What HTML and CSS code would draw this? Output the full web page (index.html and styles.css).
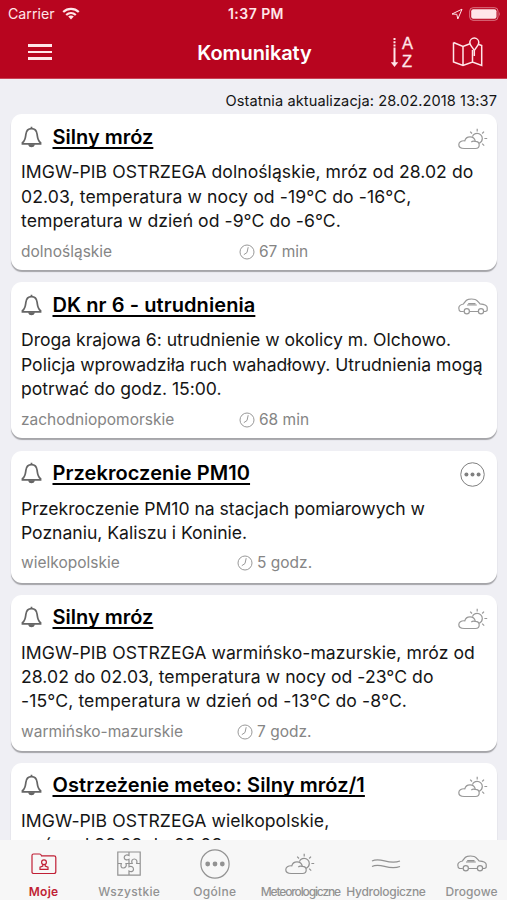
FILE: index.html
```html
<!DOCTYPE html>
<html lang="pl">
<head>
<meta charset="utf-8">
<meta name="viewport" content="width=device-width">
<title>Komunikaty</title>
<link rel="stylesheet" href="styles.css">
</head>
<body>
<svg class="defs" width="0" height="0">
  <symbol id="bell" viewBox="0 0 22 24"><path d="M1.5 19.3H20.5V18C17.5 15.7 17.4 13 16.9 9.3C16.4 5.2 14.3 3.3 11 3.3S5.6 5.2 5.1 9.3C4.6 13 4.5 15.7 1.5 18Z"/><path d="M11 3V1.2M8.6 20.5H13.4C13 22.3 9 22.3 8.6 20.5Z"/></symbol>
  <symbol id="weather" viewBox="0 0 30 22"><path d="M6.2 20.5H17.5C20 20.5 21.2 18.8 21.2 17S20 13.3 17.3 13.3C16.8 10.5 14.7 8.8 12 8.8C9.2 8.8 7.4 10.4 6.8 12.8C3 12.5 .8 14.5 .8 16.8C.8 19 2.8 20.5 6.2 20.5Z"/><path d="M13.3 14.2C14 13.3 15.5 12.8 17.3 13.3M14.5 8.6C15.2 6.5 17 5.4 19.1 5.4C22 5.4 24.3 7.7 24.3 10.6C24.3 12.8 23.2 14.4 21.2 15.4M19.2 .8V3.4M12.2 3.6L14 5.5M26 3.6L24.2 5.5M26.4 10.5H29.2M24.2 15.6L26.2 17.6"/></symbol>
  <symbol id="car" viewBox="0 0 30 18"><path d="M5.8 13.5H2.5C.8 12.8 .8 11.8 .8 10C.8 7.3 2.8 6.5 5.5 6C7.2 3.5 8.2 1.5 10.2 1.3C12 1 15.5 1 17.2 1.5C19 2 20.2 3.8 22 5.8C26.5 6.2 29.2 7 29.2 9.5V12C29.2 13.2 28 13.5 26 13.5M11.8 13.5H20M9 7H18.8M10.2 5.6H17.5"/><circle cx="8.8" cy="13.3" r="2.6"/><circle cx="23" cy="13.3" r="2.6"/></symbol>
  <symbol id="more" viewBox="0 0 30 30"><circle cx="15" cy="15" r="14.1"/><g class="solid"><circle cx="7.7" cy="15" r="2.4"/><circle cx="15" cy="15" r="2.4"/><circle cx="22.3" cy="15" r="2.4"/></g></symbol>
  <symbol id="clock" viewBox="0 0 16 16"><circle cx="8" cy="8" r="7"/><path d="M9.2 3.2L8 8.5L4.8 10.7"/></symbol>
</svg>
<div class="app">
  <header class="top">
    <div class="status">
      <div class="carrier"><span>Carrier</span>
        <svg width="18" height="13" viewBox="0 0 18 13"><path class="arc" d="M1.2 5C5.6 .8 12.4 .8 16.8 5M4.2 8C7 5.4 11 5.4 13.8 8"/><path class="fill" d="M6.2 9.6C7.8 8.2 10.2 8.2 11.8 9.6L9 12.6Z"/></svg>
      </div>
      <span class="time">1:37 PM</span>
      <div class="power">
        <svg width="12" height="12" viewBox="0 0 12 12"><path d="M1 6L11 1.2L6.8 11L5.8 6.3Z"/></svg>
        <svg width="32" height="14" viewBox="0 0 32 14"><rect class="case" x=".7" y=".7" width="28.3" height="12.6" rx="3.4"/><rect class="fill" x="2.2" y="2.2" width="25.3" height="9.6" rx="2"/><path class="fill case" d="M30.2 4.7Q32 7 30.2 9.3Z"/></svg>
      </div>
    </div>
    <div class="bar">
      <div class="menu"><i></i><i></i><i></i></div>
      <h1>Komunikaty</h1>
      <div class="tools">
        <div class="sort">
          <svg width="9" height="31" viewBox="0 0 9 31"><path class="dots" d="M4.5 1V11"/><path d="M4.5 11V28"/><path class="fill" d="M.8 25.2H8.2L4.5 30Z"/></svg>
          <div class="az"><span>A</span><span>Z</span></div>
        </div>
        <svg class="map" width="32" height="30" viewBox="0 0 32 30"><path d="M1.5 5.5L11 9.5L18 6.8M1.5 5.5V25L11 28.5L20.5 25L29.7 28.5V8.5L27 7.5M11 9.5V28.5M20.5 13V25"/><path d="M22.3 13.5C20 9.5 17.8 8.2 17.8 5.6A4.5 4.5 0 0 1 26.8 5.6C26.8 8.2 24.6 9.5 22.3 13.5V19"/></svg>
      </div>
    </div>
  </header>
  <main>
    <p class="updated">Ostatnia aktualizacja: 28.02.2018 13:37</p>
    <article class="card">
      <div class="head"><svg class="bell"><use href="#bell"/></svg><h2>Silny mróz</h2><svg class="kind weather"><use href="#weather"/></svg></div>
      <p class="body wide">IMGW-PIB OSTRZEGA dolnośląskie, mróz od 28.02 do<br><span class="wider">02.03, temperatura w nocy od -19°C do -16°C,</span><br>temperatura w dzień od -9°C do -6°C.</p>
      <div class="meta"><span>dolnośląskie</span><span class="age"><svg><use href="#clock"/></svg>67 min</span></div>
    </article>
    <article class="card">
      <div class="head"><svg class="bell"><use href="#bell"/></svg><h2 class="long">DK nr 6 - utrudnienia</h2><svg class="kind car"><use href="#car"/></svg></div>
      <p class="body">Droga krajowa 6: utrudnienie w okolicy m. Olchowo.<br>Policja wprowadziła ruch wahadłowy. Utrudnienia mogą<br>potrwać do godz. 15:00.</p>
      <div class="meta"><span>zachodniopomorskie</span><span class="age"><svg><use href="#clock"/></svg>68 min</span></div>
    </article>
    <article class="card short">
      <div class="head"><svg class="bell"><use href="#bell"/></svg><h2 class="long">Przekroczenie PM10</h2><svg class="kind more"><use href="#more"/></svg></div>
      <p class="body">Przekroczenie PM10 na stacjach pomiarowych w<br>Poznaniu, Kaliszu i Koninie.</p>
      <div class="meta"><span>wielkopolskie</span><span class="age"><svg><use href="#clock"/></svg>5 godz.</span></div>
    </article>
    <article class="card">
      <div class="head"><svg class="bell"><use href="#bell"/></svg><h2>Silny mróz</h2><svg class="kind weather"><use href="#weather"/></svg></div>
      <p class="body wide">IMGW-PIB OSTRZEGA warmińsko-mazurskie, mróz od<br>28.02 do 02.03, temperatura w nocy od -23°C do<br><span class="wider">-15°C, temperatura w dzień od -13°C do -8°C.</span></p>
      <div class="meta"><span>warmińsko-mazurskie</span><span class="age"><svg><use href="#clock"/></svg>7 godz.</span></div>
    </article>
    <article class="card">
      <div class="head"><svg class="bell"><use href="#bell"/></svg><h2 class="long">Ostrzeżenie meteo: Silny mróz/1</h2><svg class="kind weather"><use href="#weather"/></svg></div>
      <p class="body wide">IMGW-PIB OSTRZEGA wielkopolskie,<br>mróz od 28.02 do 02.03</p>
    </article>
  </main>
  <nav class="tabs">
    <a class="tab active"><span class="ico"><svg width="26" height="22" viewBox="0 0 26 22"><path d="M1 19V2.5Q1 1 2.5 1H8.5Q10 1 10.5 2.8H23Q24.8 2.8 24.8 4.5V18.5Q24.8 20.5 23 20.5H2.8Q1 20.5 1 19Z"/><circle cx="13" cy="9.2" r="2.4"/><path d="M11.8 11.5V13L9 14.2V16.3H17V14.2L14.2 13V11.5"/></svg></span>Moje</a>
    <a class="tab"><span class="ico"><svg width="24" height="25" viewBox="0 0 24 25"><path d="M.8 1H23.2V24.2H.8ZM12 1V4.5C9.5 3.3 7.2 4.3 7.2 6.5S9.5 9.5 12 8.3V12.5H9C10 15 8.5 17 6.3 17S3.5 15 4.3 12.5H.8M12 12.5H15.2C14 10 15.2 8 17.3 8S20.5 10 19.7 12.5H23.2M12 12.5V15.8C14.5 14.8 16.5 16 16.5 18.2S14.5 21.2 12 20V24"/></svg></span>Wszystkie</a>
    <a class="tab"><span class="ico"><svg width="30" height="30"><use href="#more"/></svg></span>Ogólne</a>
    <a class="tab meteo"><span class="ico"><svg width="30" height="22"><use href="#weather"/></svg></span>Meteorologiczne</a>
    <a class="tab hydro"><span class="ico"><svg width="30" height="12" viewBox="0 0 30 12"><path d="M1 3C10-1.5 17 7.5 29 3M1 8.5C10 4 17 13 29 8.5"/></svg></span>Hydrologiczne</a>
    <a class="tab road"><span class="ico"><svg width="30" height="18"><use href="#car"/></svg></span>Drogowe</a>
  </nav>
</div>
</body>
</html>
```

FILE: styles.css
```css
* { box-sizing: border-box; margin: 0; padding: 0; }
body { font-family: Inter, "Liberation Sans", sans-serif; background: #efeff4; color: #151515; }
svg { fill: none; stroke: currentColor; flex: none; }
svg .fill, svg .solid { fill: currentColor; stroke: none; }
.defs { display: none; }
.app { width: 507px; height: 900px; overflow: hidden; display: flex; flex-direction: column; }

.top { height: 79px; flex: none; background: #b8051f; color: #ffe6e9; border-bottom: 1px solid #c94256; }
.status { height: 27px; display: grid; grid-template-columns: 1fr auto 1fr; align-items: center; padding: 0 6px 0 8px; }
.carrier { display: flex; align-items: center; gap: 7px; font-size: 14.2px; }
.arc { stroke-width: 2.2; }
.time { font-size: 14px; font-weight: 600; letter-spacing: .45px; margin-left: 3px; }
.power { display: flex; align-items: center; justify-content: flex-end; gap: 6px; }
.case { opacity: .5; }
.bar { height: 50px; display: grid; grid-template-columns: 1fr auto 1fr; align-items: center; padding: 0 23px 0 28px; }
.menu { width: 24px; display: flex; flex-direction: column; gap: 4px; }
.menu i { height: 2.7px; background: currentColor; }
.bar h1 { font-size: 20px; font-weight: 600; color: #fff; letter-spacing: -.1px; margin-left: -3px; padding-top: 1px; }
.tools { display: flex; align-items: center; justify-content: flex-end; gap: 38px; }
.sort { display: flex; align-items: center; gap: 3px; stroke-width: 2; }
.dots { stroke-dasharray: 2 1.2; }
.az { display: flex; flex-direction: column; font-family: "Liberation Sans", sans-serif; font-size: 16.5px; line-height: 18px; width: 12px; -webkit-text-stroke: .3px currentColor; }
.map { stroke-width: 1.5; }

main { flex: 1; min-height: 0; overflow: hidden; padding: 12.4px 10px 0 11px; }
.updated { height: 23px; line-height: 20px; font-size: 14.6px; letter-spacing: .09px; text-align: right; white-space: nowrap; }
.card { height: 156px; margin-bottom: 12.1px; padding: 9.5px 9px 0 10px; background: #fff; border-radius: 11px; box-shadow: 0 2px 1px #a5a5a9; }
.card.short { height: 132px; }
.head { height: 36.5px; display: flex; align-items: flex-start; }
.bell { width: 21px; height: 24px; margin-top: 1px; color: #666; stroke-width: 1.8; }
.head h2 { margin-left: 10.5px; font-size: 20px; line-height: 26px; font-weight: 600; color: #000; white-space: nowrap; text-decoration: underline; text-decoration-thickness: 1.5px; text-underline-offset: 3px; text-decoration-skip-ink: none; }
.head h2.long { letter-spacing: .08px; }
.kind { margin-left: auto; color: #999; stroke-width: 1.2; }
.kind.weather { width: 30px; height: 22px; margin-top: 4px; }
.kind.car { width: 30px; height: 18px; margin-top: 6px; }
.kind.more { width: 25px; height: 25px; margin: 2px 3px 0 auto; color: #808080; }
.body { font-size: 17.6px; line-height: 24.4px; letter-spacing: -.02px; white-space: nowrap; }
.wide { letter-spacing: .05px; }
.wider { letter-spacing: .11px; }
.meta { margin-top: 8px; display: grid; grid-template-columns: 218px auto; align-items: center; font-size: 15.5px; line-height: 20px; color: #858585; white-space: nowrap; }
.meta .age { display: flex; align-items: center; gap: 4px; }
.short .age, .card:nth-of-type(4) .age { margin-left: -2px; }
.age svg { width: 16px; height: 16px; stroke-width: 1; color: #999; }

.tabs { height: 60px; flex: none; background: #f7f7f7; color: #929292; display: grid; grid-template-columns: repeat(6, 85.6px); padding-left: .8px; }
.tab { display: flex; flex-direction: column; align-items: center; font-size: 12px; font-weight: 500; line-height: 16px; letter-spacing: .3px; white-space: nowrap; }
.ico { height: 44px; padding-top: 3px; display: flex; align-items: center; stroke-width: 1.2; }
.active { color: #c01f35; font-weight: 600; }
.meteo { letter-spacing: -1.15px; }
.hydro { letter-spacing: -.3px; }
.road { letter-spacing: .1px; }
.road, .meteo { font-size: 12px; }
```
